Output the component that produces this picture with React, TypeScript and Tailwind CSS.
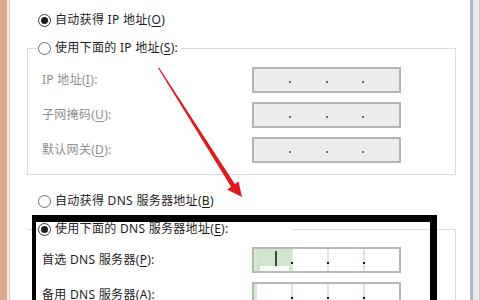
import React from "react";

type TRadioProps = {
  checked?: boolean;
};

function Radio({ checked }: TRadioProps) {
  return (
    <span
      className={
        "flex size-[13px] shrink-0 items-center justify-center rounded-full border bg-white " +
        (checked ? "border-[#3a3a3a]" : "border-[#6a6a6a]")
      }
    >
      {checked && <span className="size-[7px] rounded-full bg-[#1c1c1c]" />}
    </span>
  );
}

function Key({ k }: { k: string }) {
  return (
    <>
      (<span className="underline underline-offset-2">{k}</span>)
    </>
  );
}

function RadioRow({
  checked,
  children,
}: {
  checked?: boolean;
  children: React.ReactNode;
}) {
  return (
    <div className="flex h-4 items-center gap-[4px] text-[12px] leading-4 text-[#1e1e1e]">
      <Radio checked={checked} />
      <span className="whitespace-nowrap tracking-[0.3px]">{children}</span>
    </div>
  );
}

function IpBox({ active, selected }: { active?: boolean; selected?: boolean }) {
  if (!active) {
    return (
      <div className="flex h-[26px] w-[149px] border-2 border-[#b2b5b2] bg-[#ededed]">
        {[0, 1, 2, 3].map((i) => (
          <div key={i} className="relative flex-1">
            {i < 3 && (
              <span className="absolute right-[-1px] top-[12px] size-[2px] bg-[#6a6a6a]" />
            )}
          </div>
        ))}
      </div>
    );
  }
  return (
    <div className="flex h-[26px] w-[149px] gap-[2px] border-2 border-[#b3bab3] bg-[#d7e8d5] pl-[3px]">
      {[0, 1, 2, 3].map((i) => (
        <div
          key={i}
          className={
            "relative flex-1 " +
            (selected && i === 0 ? "bg-[#cfe6cd]" : "bg-white")
          }
        >
          {selected && i === 0 && (
            <>
              <span className="absolute left-[18px] top-[2px] h-[15px] w-[2px] bg-[#3c4a3c]" />
              <span className="absolute bottom-0 left-[3px] right-[2px] h-[5px] bg-white" />
            </>
          )}
          {i < 3 && (
            <span className="absolute right-[-2px] top-[13px] size-[2px] bg-[#1a1a1a]" />
          )}
        </div>
      ))}
    </div>
  );
}

function FieldRow({
  label,
  disabled,
  active,
  selected,
}: {
  label: React.ReactNode;
  disabled?: boolean;
  active?: boolean;
  selected?: boolean;
}) {
  return (
    <div className="flex items-center">
      <div
        className={
          "w-[224px] shrink-0 whitespace-nowrap pl-[14px] text-[12px] tracking-[0.3px] " +
          (disabled ? "text-[#8e8e8e]" : "text-[#1e1e1e]")
        }
      >
        {label}
      </div>
      <IpBox active={active} selected={selected} />
    </div>
  );
}

export default function App() {
  return (
    <div
      className="relative flex h-[300px] w-[480px] overflow-hidden bg-white"
      style={{ fontFamily: '"Noto Sans", "Noto Sans CJK SC", sans-serif' }}
    >
      <div className="w-[7px] shrink-0 bg-[#d8a98b]" />
      <div className="w-[2px] shrink-0 bg-[#efebe7]" />
      <div className="w-[1px] shrink-0 bg-[#cfcfcf]" />

      <div className="flex w-[458px] shrink-0 flex-col pt-[12px]">
        <div className="pl-[28px]">
          <RadioRow checked>
            自动获得 IP 地址<Key k="O" />
          </RadioRow>
        </div>

        <fieldset className="ml-[17px] mt-[12px] w-[429px] border border-[#dcdcdc] pb-[11px]">
          <legend className="ml-[10px] bg-white pr-[3px]">
            <RadioRow>
              使用下面的 IP 地址<Key k="S" />:
            </RadioRow>
          </legend>
          <div className="flex flex-col gap-[9px] pt-[11px]">
            <FieldRow
              disabled
              label={
                <>
                  IP 地址<Key k="I" />:
                </>
              }
            />
            <FieldRow
              disabled
              label={
                <>
                  子网掩码<Key k="U" />:
                </>
              }
            />
            <FieldRow
              disabled
              label={
                <>
                  默认网关<Key k="D" />:
                </>
              }
            />
          </div>
        </fieldset>

        <div className="mt-[18px] pl-[28px]">
          <RadioRow>
            自动获得 DNS 服务器地址<Key k="B" />
          </RadioRow>
        </div>

        <fieldset className="ml-[17px] mt-[12px] w-[429px] border border-l-transparent border-[#dcdcdc] pb-[11px]">
          <legend className="ml-[10px] w-[254px] bg-white">
            <RadioRow checked>
              使用下面的 DNS 服务器地址<Key k="E" />:
            </RadioRow>
          </legend>
          <div className="flex flex-col gap-[9px] pt-[10px]">
            <FieldRow
              active
              selected
              label={
                <>
                  首选 DNS 服务器<Key k="P" />:
                </>
              }
            />
            <FieldRow
              active
              label={
                <>
                  备用 DNS 服务器<Key k="A" />:
                </>
              }
            />
          </div>
        </fieldset>
      </div>

      <div className="w-[2px] shrink-0 bg-white" />
      <div className="w-[1px] shrink-0 bg-[#b9bcc0]" />
      <div className="w-[2px] shrink-0 bg-[#b0b4b8]" />
      <div className="w-[6px] shrink-0 bg-[#e6e9ee]" />
      <div className="w-[3px] shrink-0 bg-[#e9c3ab]" />

      {/* highlight box */}
      <div className="pointer-events-none absolute left-[32px] top-[215px] h-[100px] w-[405px] border-l-4 border-r-[7px] border-t-[7px] border-black" />

      {/* red arrow */}
      <svg
        className="pointer-events-none absolute left-0 top-0"
        width="480"
        height="300"
        viewBox="0 0 480 300"
      >
        <polygon
          points="158,68 159,67.5 235.5,185 231.5,187.5"
          fill="#e0191c"
        />
        <polygon points="242,197 227,189.5 238.5,181.5" fill="#e0191c" />
      </svg>
    </div>
  );
}
